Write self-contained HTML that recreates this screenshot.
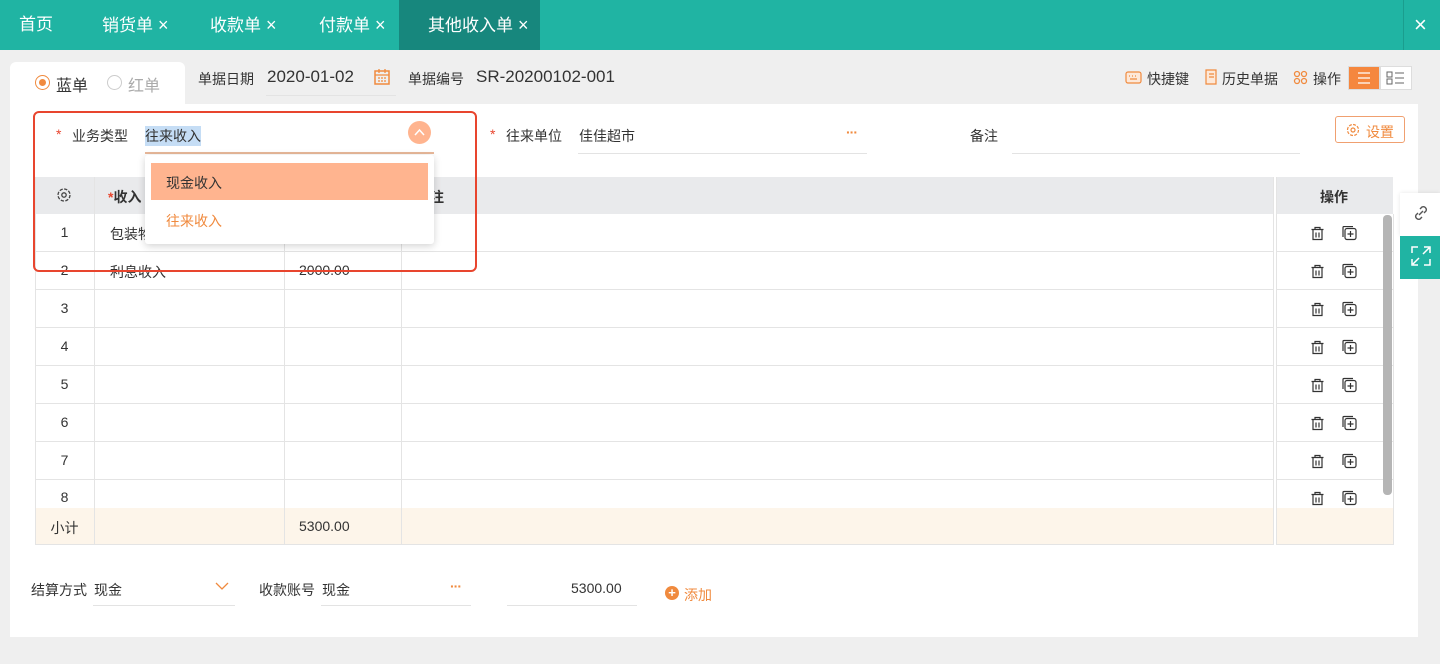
<!DOCTYPE html>
<html><head><meta charset="utf-8"><style>
*{margin:0;padding:0;box-sizing:border-box}
body{width:1440px;height:664px;background:#efefef;font-family:"Liberation Sans","Noto Sans CJK SC",sans-serif;color:#333;position:relative;overflow:hidden;font-size:14px}
.a{position:absolute}
.top{left:0;top:0;width:1440px;height:50px;background:#20b4a3}
.tab{top:0;height:50px;line-height:50px;color:#fff;font-size:17px}
.tab .x{font-size:18px;margin-left:5px;font-weight:300}
.t{white-space:nowrap}
.hline{height:1px;background:#e3e3e3}
.orange{color:#f08a3e}
.dots{font-weight:bold;letter-spacing:-1px;font-size:14px}
.row{left:35px;width:1238px;height:38px;border-bottom:1px solid #e4e4e4;background:#fff}
.vl{width:1px;background:#e4e4e4}
.num{left:35px;width:59px;text-align:center;font-size:14px}
</style></head><body>
<div class="a top"></div>
<div class="a tab" style="left:19px">首页</div>
<div class="a tab" style="left:102px">销货单<span class="x">×</span></div>
<div class="a tab" style="left:210px">收款单<span class="x">×</span></div>
<div class="a tab" style="left:319px">付款单<span class="x">×</span></div>
<div class="a" style="left:399px;top:0;width:141px;height:50px;background:#17877d"></div>
<div class="a tab" style="left:428px">其他收入单<span class="x">×</span></div>
<div class="a" style="left:1403px;top:0;width:1px;height:50px;background:#1a9d8e"></div>
<div class="a tab" style="left:1414px;font-size:22px;font-weight:300">×</div>

<div class="a" style="left:10px;top:62px;width:175px;height:50px;background:#fff;border-radius:6px 6px 0 0"></div>
<div class="a" style="left:35px;top:75px;width:15px;height:15px;border-radius:50%;border:1px solid #f08a3e"></div>
<div class="a" style="left:39px;top:79px;width:7px;height:7px;border-radius:50%;background:#f08a3e"></div>
<div class="a t" style="left:56px;top:72px;font-size:16px">蓝单</div>
<div class="a" style="left:107px;top:75px;width:15px;height:15px;border-radius:50%;border:1px solid #ccc"></div>
<div class="a t" style="left:128px;top:72px;font-size:16px;color:#aaa">红单</div>
<div class="a t" style="left:198px;top:69px">单据日期</div>
<div class="a t" style="left:267px;top:67px;font-size:17px">2020-01-02</div>
<svg class="a" style="left:373px;top:68px" width="18" height="18" viewBox="0 0 18 18"><rect x="2" y="3" width="14" height="13" fill="none" stroke="#f08a3e" stroke-width="1.5"/><path d="M2 7h14M6 1v4M12 1v4M5 10h2M8 10h2M11 10h2M5 13h2M8 13h2M11 13h2" stroke="#f08a3e" stroke-width="1.3"/></svg>
<div class="a hline" style="left:266px;top:95px;width:130px"></div>
<div class="a t" style="left:408px;top:69px">单据编号</div>
<div class="a t" style="left:476px;top:67px;font-size:17px">SR-20200102-001</div>

<svg class="a" style="left:1125px;top:70px" width="17" height="15" viewBox="0 0 17 15"><rect x="1" y="2" width="15" height="11" rx="2" fill="#fde8d8" stroke="#f08a3e" stroke-width="1.2"/><path d="M4 6h1M7 6h1M10 6h1M5 9h7" stroke="#f08a3e" stroke-width="1.3"/></svg>
<div class="a t" style="left:1147px;top:69px">快捷键</div>
<svg class="a" style="left:1204px;top:69px" width="14" height="16" viewBox="0 0 14 16"><path d="M2 1h10v14H2z" fill="#fde8d8" stroke="#f08a3e" stroke-width="1.2"/><path d="M5 5h5M5 8h5" stroke="#f08a3e" stroke-width="1.2"/></svg>
<div class="a t" style="left:1222px;top:69px">历史单据</div>
<svg class="a" style="left:1293px;top:70px" width="15" height="15" viewBox="0 0 15 15"><g fill="none" stroke="#f08a3e" stroke-width="1.3"><circle cx="4" cy="4" r="2.5"/><circle cx="11" cy="4" r="2.5"/><circle cx="4" cy="11" r="2.5"/><circle cx="11" cy="11" r="2.5"/></g></svg>
<div class="a t" style="left:1313px;top:69px">操作</div>
<div class="a" style="left:1348px;top:66px;width:32px;height:24px;background:#f5873e;border:1px solid #ddd"></div>
<svg class="a" style="left:1357px;top:71px" width="14" height="14"><path d="M1 2h12M1 7h12M1 12h12" stroke="#fff" stroke-width="1.2"/></svg>
<div class="a" style="left:1380px;top:66px;width:32px;height:24px;background:#fff;border:1px solid #ddd"></div>
<svg class="a" style="left:1386px;top:71px" width="20" height="14"><g fill="none" stroke="#666" stroke-width="1"><rect x="1" y="1" width="5" height="5"/><rect x="1" y="8" width="5" height="5"/><path d="M9 2h9M9 7h9M9 12h9"/></g></svg>

<div class="a" style="left:10px;top:104px;width:1408px;height:533px;background:#fff"></div>

<div class="a t" style="left:56px;top:126px;color:#e8452e">*</div>
<div class="a t" style="left:72px;top:126px">业务类型</div>
<div class="a t" style="left:145px;top:126px;background:#c5ddf5">往来收入</div>
<div class="a" style="left:408px;top:121px;width:23px;height:23px;border-radius:50%;background:#ffb48f"></div>
<svg class="a" style="left:413px;top:126px" width="13" height="13"><path d="M2 9l4.5-5 4.5 5" fill="none" stroke="#fff" stroke-width="1.5"/></svg>
<div class="a" style="left:145px;top:152px;width:289px;height:2px;background:#e8b89a"></div>

<div class="a t" style="left:490px;top:126px;color:#e8452e">*</div>
<div class="a t" style="left:506px;top:126px">往来单位</div>
<div class="a t" style="left:579px;top:126px">佳佳超市</div>
<div class="a t orange dots" style="left:846px;top:124px">···</div>
<div class="a hline" style="left:578px;top:153px;width:289px"></div>
<div class="a t" style="left:970px;top:126px">备注</div>
<div class="a hline" style="left:1012px;top:153px;width:288px"></div>
<div class="a" style="left:1335px;top:116px;width:70px;height:27px;border:1px solid #f0a070;border-radius:3px"></div>
<svg class="a" style="left:1346px;top:123px" width="14" height="14" viewBox="0 0 14 14"><circle cx="7" cy="7" r="5.5" fill="none" stroke="#f08a3e" stroke-width="1.2" stroke-dasharray="3 1.3"/><circle cx="7" cy="7" r="2" fill="none" stroke="#f08a3e" stroke-width="1.2"/></svg>
<div class="a t orange" style="left:1366px;top:122px">设置</div>

<div class="a" style="left:35px;top:177px;width:1238px;height:37px;background:#e9eaec"></div>
<div class="a" style="left:1276px;top:177px;width:117px;height:37px;background:#e9eaec"></div>
<svg class="a" style="left:56px;top:187px" width="16" height="16" viewBox="0 0 16 16"><circle cx="8" cy="8" r="6" fill="none" stroke="#444" stroke-width="1.3" stroke-dasharray="3.3 1.4"/><circle cx="8" cy="8" r="2.2" fill="none" stroke="#444" stroke-width="1.3"/></svg>
<div class="a t" style="left:108px;top:187px;font-weight:bold"><span style="color:#e8452e">*</span>收入</div>
<div class="a t" style="left:430px;top:187px;font-weight:bold">注</div>
<div class="a t" style="left:1320px;top:187px;font-weight:bold">操作</div>

<div class="a row" style="top:214px"></div>
<div class="a row" style="top:252px"></div>
<div class="a row" style="top:290px"></div>
<div class="a row" style="top:328px"></div>
<div class="a row" style="top:366px"></div>
<div class="a row" style="top:404px"></div>
<div class="a row" style="top:442px"></div>
<div class="a row" style="top:480px;height:28px;border:none"></div>
<div class="a" style="left:35px;top:508px;width:1238px;height:37px;background:#fdf5ea;border-bottom:1px solid #e4e4e4"></div>
<div class="a" style="left:1276px;top:508px;width:117px;height:37px;background:#fdf5ea;border-bottom:1px solid #e4e4e4"></div>
<div class="a" style="left:1276px;top:214px;width:117px;height:294px;background:#fff"></div>
<div class="a vl" style="left:35px;top:177px;height:368px"></div>
<div class="a vl" style="left:94px;top:177px;height:368px"></div>
<div class="a vl" style="left:284px;top:214px;height:331px"></div>
<div class="a vl" style="left:401px;top:214px;height:331px"></div>
<div class="a vl" style="left:1273px;top:177px;height:368px"></div>
<div class="a vl" style="left:1276px;top:177px;height:368px"></div>
<div class="a vl" style="left:1393px;top:214px;height:331px"></div>
<div class="a" style="left:1276px;top:251px;width:117px;height:1px;background:#e4e4e4"></div>
<div class="a" style="left:1276px;top:289px;width:117px;height:1px;background:#e4e4e4"></div>
<div class="a" style="left:1276px;top:327px;width:117px;height:1px;background:#e4e4e4"></div>
<div class="a" style="left:1276px;top:365px;width:117px;height:1px;background:#e4e4e4"></div>
<div class="a" style="left:1276px;top:403px;width:117px;height:1px;background:#e4e4e4"></div>
<div class="a" style="left:1276px;top:441px;width:117px;height:1px;background:#e4e4e4"></div>
<div class="a" style="left:1276px;top:479px;width:117px;height:1px;background:#e4e4e4"></div>
<div class="a" style="left:1383px;top:215px;width:9px;height:280px;background:#b5b5b5;border-radius:4px"></div>

<div class="a num" style="top:224px">1</div>
<div class="a num" style="top:262px">2</div>
<div class="a num" style="top:300px">3</div>
<div class="a num" style="top:338px">4</div>
<div class="a num" style="top:376px">5</div>
<div class="a num" style="top:414px">6</div>
<div class="a num" style="top:452px">7</div>
<div class="a num" style="top:489px">8</div>
<div class="a num" style="top:518px">小计</div>
<div class="a t" style="left:110px;top:224px">包装物</div>
<div class="a t" style="left:110px;top:262px">利息收入</div>
<div class="a t" style="left:299px;top:262px">2000.00</div>
<div class="a t" style="left:299px;top:518px">5300.00</div>

<svg class="a" style="left:1310px;top:226px" width="80" height="280">
<defs><g id="ic"><path d="M1.5 3.5h12M5 3.5V1.5h5v2M3 3.5v10h9v-10M6 6.5v5M9 6.5v5" fill="none" stroke="#333" stroke-width="1.2"/><rect x="35" y="2.5" width="11" height="11" rx="2" fill="#fff" stroke="#333" stroke-width="1.2"/><path d="M33 11V1.5a1 1 0 0 1 1-1h9" fill="none" stroke="#333" stroke-width="1.2"/><path d="M40.5 5v6M37.5 8h6" stroke="#333" stroke-width="1.2"/></g></defs>
<use href="#ic" y="0"/><use href="#ic" y="38"/><use href="#ic" y="76"/><use href="#ic" y="114"/><use href="#ic" y="152"/><use href="#ic" y="190"/><use href="#ic" y="228"/><use href="#ic" y="265"/>
</svg>

<div class="a" style="left:145px;top:155px;width:289px;height:89px;background:#fff;box-shadow:0 2px 8px rgba(0,0,0,.18);border-radius:3px"></div>
<div class="a" style="left:151px;top:163px;width:277px;height:37px;background:#ffb48f"></div>
<div class="a t" style="left:166px;top:173px">现金收入</div>
<div class="a t orange" style="left:166px;top:211px">往来收入</div>
<div class="a" style="left:33px;top:111px;width:444px;height:161px;border:2px solid #e8452e;border-radius:6px"></div>

<div class="a" style="left:1400px;top:193px;width:40px;height:43px;background:#fff;box-shadow:0 0 4px rgba(0,0,0,.1)"></div>
<svg class="a" style="left:1411px;top:203px" width="20" height="20" viewBox="0 0 20 20"><g fill="none" stroke="#555" stroke-width="1.4"><path d="M8 12l4-4"/><path d="M9 6l2-2a3 3 0 0 1 4 4l-2 2"/><path d="M11 14l-2 2a3 3 0 0 1-4-4l2-2"/></g></svg>
<div class="a" style="left:1400px;top:236px;width:40px;height:43px;background:#20b4a3"></div>
<svg class="a" style="left:1410px;top:245px" width="22" height="22" viewBox="0 0 22 22"><g fill="none" stroke="#fff" stroke-width="1.5"><path d="M2 8V2h6M14 2h6v6M20 14v6h-6M8 20H2v-6M13 9l6-6M9 13l-6 6"/></g></svg>

<div class="a t" style="left:31px;top:580px">结算方式</div>
<div class="a t" style="left:94px;top:580px">现金</div>
<svg class="a" style="left:214px;top:580px" width="16" height="12"><path d="M2 3l6 6 6-6" fill="none" stroke="#f08a3e" stroke-width="1.3"/></svg>
<div class="a hline" style="left:93px;top:605px;width:142px"></div>
<div class="a t" style="left:259px;top:580px">收款账号</div>
<div class="a t" style="left:322px;top:580px">现金</div>
<div class="a t orange dots" style="left:450px;top:578px">···</div>
<div class="a hline" style="left:321px;top:605px;width:150px"></div>
<div class="a t" style="left:571px;top:580px">5300.00</div>
<div class="a hline" style="left:507px;top:605px;width:130px"></div>
<div class="a" style="left:665px;top:586px;width:14px;height:14px;border-radius:50%;background:#f08a3e;color:#fff;font-size:13px;line-height:14px;text-align:center;font-weight:bold">+</div>
<div class="a t orange" style="left:684px;top:585px">添加</div>
</body></html>
